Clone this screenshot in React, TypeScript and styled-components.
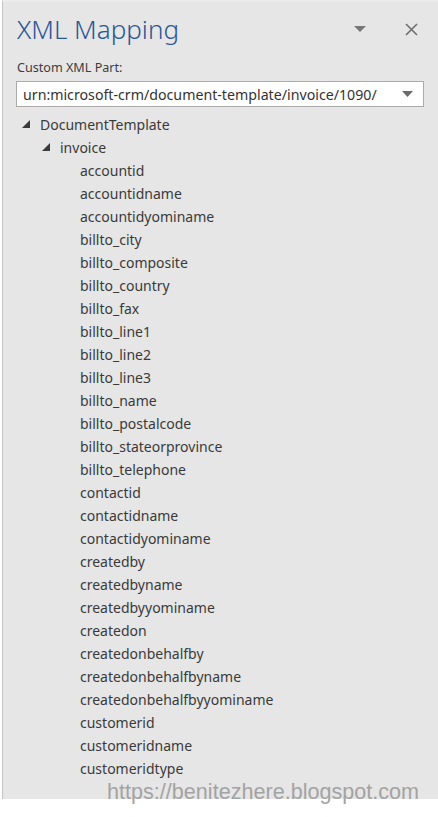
import React from "react";
import styled, { createGlobalStyle } from "styled-components";

const Global = createGlobalStyle`
  html, body { margin: 0; padding: 0; background: #ffffff; }
  body { font-family: "Segoe UI", "Noto Sans", sans-serif; }
`;

const Page = styled.div`
  position: relative;
  width: 438px;
  height: 817px;
  background: #ffffff;
`;

const Pane = styled.div`
  height: 799px;
  box-sizing: border-box;
  margin-left: 2px;
  background: #e6e6e6;
  border-left: 1px solid #c4c4c4;
  border-top: 2px solid #ececec;
  display: flex;
  flex-direction: column;
  overflow: hidden;
`;

const Header = styled.div`
  display: flex;
  align-items: center;
  height: 40px;
  padding: 7px 13px 0 14px;
`;

const Title = styled.h1`
  flex: 1;
  margin: 0;
  font-family: "Segoe UI", "Noto Sans", sans-serif;
  font-weight: 300;
  font-size: 26px;
  color: #2b5797;
`;

const IconButton = styled.div<{ $gap?: number }>`
  width: 28px;
  height: 28px;
  display: flex;
  align-items: center;
  justify-content: center;
  margin-left: ${(p) => p.$gap ?? 0}px;
`;

const Label = styled.div`
  margin: 10px 0 0 14px;
  font-size: 12.6px;
  color: #3d3d3d;
  line-height: 18px;
`;

const Combo = styled.div`
  margin: 4px 14px 0 13px;
  height: 26px;
  box-sizing: border-box;
  background: #ffffff;
  border: 1px solid #ababab;
  display: flex;
  align-items: center;
  padding: 0 10px 0 6px;
`;

const ComboText = styled.div`
  flex: 1;
  font-size: 14.2px;
  color: #333333;
  white-space: nowrap;
  overflow: hidden;
`;

const Tree = styled.div`
  margin-top: 6px;
  display: flex;
  flex-direction: column;
`;

const Row = styled.div<{ $level: number }>`
  height: 23px;
  display: flex;
  align-items: center;
  padding-left: ${(p) => 17 + p.$level * 20}px;
  font-size: 14px;
  color: #3a3a3a;
  white-space: nowrap;
`;

const Toggle = styled.span`
  flex-shrink: 0;
  width: 18px;
  margin-left: -18px;
  display: flex;
  align-items: center;
`;

const Watermark = styled.div`
  position: absolute;
  left: 107px;
  top: 779px;
  font-family: "Liberation Sans", Arial, sans-serif;
  font-size: 21.6px;
  color: #a3a3a3;
  white-space: nowrap;
`;

const Expander = () => (
  <svg width="9" height="9" viewBox="0 0 9 9">
    <polygon points="8,0 8,8 0,8" fill="#3a3a3a" />
  </svg>
);

const fields = [
  "accountid",
  "accountidname",
  "accountidyominame",
  "billto_city",
  "billto_composite",
  "billto_country",
  "billto_fax",
  "billto_line1",
  "billto_line2",
  "billto_line3",
  "billto_name",
  "billto_postalcode",
  "billto_stateorprovince",
  "billto_telephone",
  "contactid",
  "contactidname",
  "contactidyominame",
  "createdby",
  "createdbyname",
  "createdbyyominame",
  "createdon",
  "createdonbehalfby",
  "createdonbehalfbyname",
  "createdonbehalfbyyominame",
  "customerid",
  "customeridname",
  "customeridtype",
];

export default function App() {
  return (
    <Page>
      <Global />
      <Pane>
        <Header>
          <Title>XML Mapping</Title>
          <IconButton>
            <svg width="12" height="7" viewBox="0 0 12 7">
              <polygon points="0,0 12,0 6,6" fill="#777777" />
            </svg>
          </IconButton>
          <IconButton $gap={23}>
            <svg width="13" height="13" viewBox="0 0 13 13">
              <path d="M1 1 L12 12 M12 1 L1 12" stroke="#6f6f6f" strokeWidth="1.6" />
            </svg>
          </IconButton>
        </Header>
        <Label>Custom XML Part:</Label>
        <Combo>
          <ComboText>urn:microsoft-crm/document-template/invoice/1090/</ComboText>
          <svg width="11" height="6" viewBox="0 0 11 6">
            <polygon points="0,0 11,0 5.5,6" fill="#6a6a6a" />
          </svg>
        </Combo>
        <Tree>
          <Row $level={1}>
            <Toggle>
              <Expander />
            </Toggle>
            DocumentTemplate
          </Row>
          <Row $level={2}>
            <Toggle>
              <Expander />
            </Toggle>
            invoice
          </Row>
          {fields.map((f) => (
            <Row key={f} $level={3}>
              {f}
            </Row>
          ))}
        </Tree>
      </Pane>
      <Watermark>https://benitezhere.blogspot.com</Watermark>
    </Page>
  );
}
